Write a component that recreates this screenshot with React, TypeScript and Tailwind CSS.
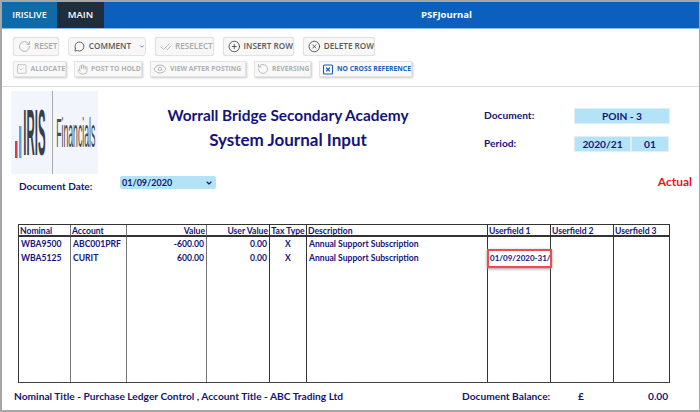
import React from "react";
import { RotateCw, MessageCircle, ChevronDown, CheckCheck, CirclePlus, CircleX, SquareCheck, Hand, Eye, RotateCcw, SquareX } from "lucide-react";

const columns = [
    { label: "Nominal", cls: "text-left pl-[1px]" },
    { label: "Account", cls: "text-left pl-[1px]" },
    { label: "Value", cls: "text-right pr-[1px]" },
    { label: "User Value", cls: "text-right pr-[1px]" },
    { label: "Tax Type", cls: "text-center" },
    { label: "Description", cls: "text-left pl-[1px]" },
    { label: "Userfield 1", cls: "text-left pl-[1px]" },
    { label: "Userfield 2", cls: "text-left pl-[1px]" },
    { label: "Userfield 3", cls: "text-left pl-[1px]" },
];

const rows = [
    ["WBA9500", "ABC001PRF", "-600.00", "0.00", "X", "Annual Support Subscription", "", "", ""],
    ["WBA5125", "CURIT", "600.00", "0.00", "X", "Annual Support Subscription", "01/09/2020-31/", "", ""],
];

function BigButton({ icon, label, width, active }: { icon: React.ReactNode; label: string; width: string; active?: boolean }) {
    return (
        <button className={`${width} h-[19px] flex items-center gap-[3px] pl-[4px] rounded-[3px] bg-[#f7f7f7] border border-[#e2e2e2] shadow-[0_0_1px_#ccc] text-[8.2px] font-semibold whitespace-nowrap overflow-hidden ${active ? "text-[#5a5a5a]" : "text-[#a9a9a9]"}`}>
            {icon}
            {label}
        </button>
    );
}

function SmallButton({ icon, label, width, active }: { icon: React.ReactNode; label: string; width: string; active?: boolean }) {
    return (
        <button className={`${width} h-[16px] flex items-center gap-[3px] pl-[2px] bg-[#f8f8f8] border border-[#e4e4e4] shadow-[1px_1px_2px_#c8c8c8] text-[6.8px] font-bold whitespace-nowrap overflow-hidden ${active ? "text-[#1a5fb4]" : "text-[#b0b0b0]"}`}>
            {icon}
            {label}
        </button>
    );
}

function Logo() {
    return (
        <div className="w-[87px] h-[83px] bg-[#f2f5fb] flex items-center overflow-hidden [font-family:'Liberation_Sans',sans-serif]">
            <div className="w-[41px] h-full flex items-center pl-[4px]">
                <svg width="8" height="32" viewBox="0 0 8 32" className="mt-[19px] shrink-0">
                    <rect x="0" y="15" width="2.5" height="17" fill="#d83a46" />
                    <rect x="4" y="0" width="2.5" height="32" fill="#55a7dc" />
                </svg>
                <div className="w-[22px] flex justify-center">
                    <span className="shrink-0 text-[#3a3f47] text-[20px] leading-none font-bold scale-x-[0.57] scale-y-[3.2]">IRIS</span>
                </div>
            </div>
            <div className="w-[1px] h-full bg-[#a9adb2]" />
            <div className="w-[45px] flex justify-center">
                <span className="shrink-0 text-[#4a4a4a] text-[15px] leading-none scale-x-[0.58] scale-y-[2.7]">Financials</span>
            </div>
        </div>
    );
}

export default function App() {
    return (
        <div className="w-[700px] h-[412px] bg-[#a6a6a6] pt-[2px] pl-[2px] pr-[1px] pb-[2px] overflow-hidden [font-family:'Lato',sans-serif] text-[#14147a]">
            <div className="w-full h-full bg-white flex flex-col">
                {/* Top bar */}
                <header className="h-[27px] shrink-0 flex bg-[#0b5fbd] border-b border-[#8db9e8] text-white text-[9.5px] font-semibold [font-family:'Open_Sans',sans-serif]">
                    <div className="w-[55px] bg-[#0f6aa8] flex items-center justify-center text-[9px]">IRISLIVE</div>
                    <div className="w-[47px] bg-[#1f2d3d] flex items-center justify-center">MAIN</div>
                    <div className="flex-1 flex items-center justify-center pl-[90px] font-bold">PSFJournal</div>
                </header>

                {/* Toolbar */}
                <div className="h-[58px] shrink-0 border-b border-[#d9d9d9] pl-[11px] pt-[8px] flex flex-col gap-[5px] [font-family:'Open_Sans',sans-serif]">
                    <div className="flex gap-[9px]">
                        <BigButton width="w-[46px]" label="RESET" icon={<RotateCw size={13} strokeWidth={1.6} />} />
                        <button className="w-[78px] h-[19px] flex items-center gap-[4px] pl-[5px] rounded-[3px] bg-[#f7f7f7] border border-[#e2e2e2] text-[8.2px] font-semibold text-[#5a5a5a]">
                            <MessageCircle size={13} className="text-[#444]" strokeWidth={1.8} />
                            COMMENT
                            <ChevronDown size={7} strokeWidth={3} className="ml-[4px]" />
                        </button>
                        <BigButton width="w-[59px]" label="RESELECT" icon={<CheckCheck size={12} strokeWidth={1.6} />} />
                        <BigButton width="w-[71px]" label="INSERT ROW" active icon={<CirclePlus size={13} strokeWidth={1.6} className="text-[#444]" />} />
                        <BigButton width="w-[72px]" label="DELETE ROW" active icon={<CircleX size={13} strokeWidth={1.6} className="text-[#444]" />} />
                    </div>
                    <div className="flex gap-[8px]">
                        <SmallButton width="w-[53px]" label="ALLOCATE" icon={<SquareCheck size={12} strokeWidth={1.5} />} />
                        <SmallButton width="w-[68px]" label="POST TO HOLD" icon={<Hand size={11} strokeWidth={1.8} />} />
                        <SmallButton width="w-[96px]" label="VIEW AFTER POSTING" icon={<Eye size={14} strokeWidth={1.6} />} />
                        <SmallButton width="w-[57px]" label="REVERSING" icon={<RotateCcw size={12} strokeWidth={1.6} />} />
                        <SmallButton width="w-[93px]" label="NO CROSS REFERENCE" active icon={<SquareX size={13} strokeWidth={2.2} />} />
                    </div>
                </div>

                {/* Heading */}
                <div className="h-[84px] shrink-0 pl-[9px] pt-[4px] flex">
                    <Logo />
                    <div className="w-[380px] pt-[13px] text-center font-bold">
                        <div className="text-[15.4px] leading-[22px]">Worrall Bridge Secondary Academy</div>
                        <div className="text-[17px] leading-[24px] mt-[2px]">System Journal Input</div>
                    </div>
                    <div className="flex-1 pt-[17px] pl-[6px] text-[10.2px] font-bold">
                        <div className="flex items-center h-[16px]">
                            <span className="w-[90px]">Document:</span>
                            <div className="w-[96px] h-[16px] bg-[#b3e3f6] border border-[#e4eef3] text-center leading-[14px]">POIN - 3</div>
                        </div>
                        <div className="flex items-center h-[16px] mt-[12px]">
                            <span className="w-[90px]">Period:</span>
                            <div className="w-[57px] h-[16px] bg-[#b3e3f6] border border-[#e4eef3] text-center leading-[14px]">2020/21</div>
                            <div className="w-[38px] h-[16px] bg-[#b3e3f6] border border-[#e4eef3] text-center leading-[14px]">01</div>
                        </div>
                    </div>
                </div>

                {/* Document date */}
                <div className="h-[53px] shrink-0 flex items-start pt-[5px] pl-[17px] font-bold">
                    <span className="w-[101px] text-[10px] leading-[14px] mt-[3px]">Document Date:</span>
                    <div className="w-[96px] h-[13px] rounded-[2px] bg-[#b3e3f6] flex items-center justify-between px-[2px] text-[9px]">
                        01/09/2020
                        <ChevronDown size={8} strokeWidth={3.5} className="mr-[1px]" />
                    </div>
                    <span className="ml-auto mr-[7px] text-[12px] leading-[14px] mt-[-1px] text-[#f01020]">Actual</span>
                </div>

                {/* Journal lines */}
                <div className="relative ml-[16px] w-[652px] h-[159px] shrink-0 border border-[#333] border-b-[#444] grid grid-cols-[52px_56px_80px_63px_37px_181px_63px_63px_56px] grid-rows-[12px_14px_14px_1fr] text-[8.6px] font-bold">
                    {columns.map((col, i) => (
                        <div key={col.label} className={`border-b-2 border-[#333] leading-[12px] whitespace-nowrap overflow-hidden ${i < 8 ? "border-r" : ""} ${i < 3 ? "border-r-[#777]" : "border-r-[#333]"} ${col.cls}`}>
                            {col.label}
                        </div>
                    ))}
                    {rows.map((row) =>
                        row.map((value, i) => (
                            <div key={`${row[0]}-${i}`} className={`leading-[14px] whitespace-nowrap overflow-hidden ${i === 6 ? "text-[8px]" : ""} ${i < 8 ? "border-r" : ""} ${i < 3 ? "border-r-[#777]" : "border-r-[#333]"} ${i === 2 || i === 3 ? "text-right pr-[2px]" : i === 4 ? "text-center" : "pl-[2px]"}`}>
                                {value}
                            </div>
                        ))
                    )}
                    {columns.map((col, i) => (
                        <div key={`filler-${col.label}`} className={`${i < 8 ? "border-r" : ""} ${i < 3 ? "border-r-[#777]" : "border-r-[#333]"}`} />
                    ))}
                    <div className="absolute left-[468px] top-[24px] w-[65px] h-[19px] border-2 border-[#ee4a50] shadow-[0_1px_3px_#999]" />
                </div>

                {/* Footer */}
                <div className="flex-1 flex items-center pl-[12px] text-[10.2px] font-bold">
                    <span className="w-[448px]">Nominal Title - Purchase Ledger Control , Account Title - ABC Trading Ltd</span>
                    <span className="w-[116px]">Document Balance:</span>
                    <span className="w-[70px]">£</span>
                    <span>0.00</span>
                </div>
            </div>
        </div>
    );
}
